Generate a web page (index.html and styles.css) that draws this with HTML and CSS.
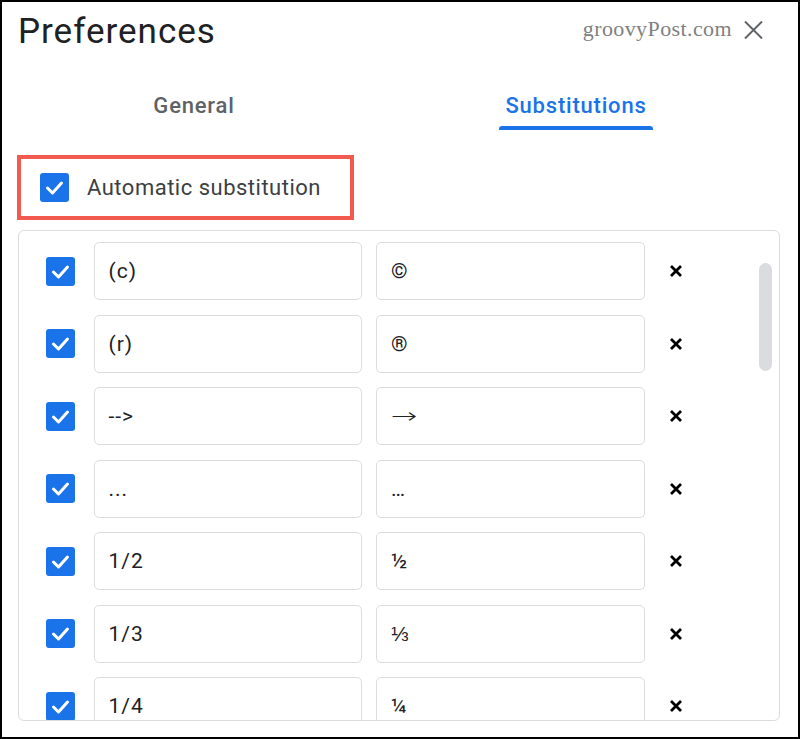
FILE: index.html
```html
<!DOCTYPE html>
<html>
<head>
<meta charset="utf-8">
<link rel="stylesheet" href="styles.css">
</head>
<body>
<div class="frame">
  <div class="header">
    <div class="title">Preferences</div>
    <div class="brand">
      <span class="site">groovyPost.com</span>
      <svg class="close" width="19" height="18" viewBox="0 0 19 18"><path d="M1 0.5 L18 17.5 M18 0.5 L1 17.5" stroke="#5f6368" stroke-width="2" fill="none"/></svg>
    </div>
  </div>
  <div class="tabs">
    <div class="tab">General<span class="bar"></span></div>
    <div class="tab active">Substitutions<span class="bar"></span></div>
  </div>
  <div class="auto">
    <span class="cb big"><svg viewBox="0 0 29 29"><path d="M7.5 15 L12.5 20 L21.5 10" stroke="#fff" stroke-width="3" fill="none" stroke-linecap="round" stroke-linejoin="round"/></svg></span>
    <span class="auto-label">Automatic substitution</span>
  </div>
  <div class="list">
    <div class="row"><span class="cb"><svg viewBox="0 0 29 29"><path d="M7.5 15 L12.5 20 L21.5 10" stroke="#fff" stroke-width="3" fill="none" stroke-linecap="round" stroke-linejoin="round"/></svg></span><div class="field f1">(c)</div><div class="field f2">©</div><svg class="del" viewBox="0 0 14 14"><path d="M2 2 L12 12 M12 2 L2 12" stroke="#000" stroke-width="2.8" fill="none"/></svg></div>
    <div class="row"><span class="cb"><svg viewBox="0 0 29 29"><path d="M7.5 15 L12.5 20 L21.5 10" stroke="#fff" stroke-width="3" fill="none" stroke-linecap="round" stroke-linejoin="round"/></svg></span><div class="field f1">(r)</div><div class="field f2">®</div><svg class="del" viewBox="0 0 14 14"><path d="M2 2 L12 12 M12 2 L2 12" stroke="#000" stroke-width="2.8" fill="none"/></svg></div>
    <div class="row"><span class="cb"><svg viewBox="0 0 29 29"><path d="M7.5 15 L12.5 20 L21.5 10" stroke="#fff" stroke-width="3" fill="none" stroke-linecap="round" stroke-linejoin="round"/></svg></span><div class="field f1">--&gt;</div><div class="field f2"><span class="arrow">→</span></div><svg class="del" viewBox="0 0 14 14"><path d="M2 2 L12 12 M12 2 L2 12" stroke="#000" stroke-width="2.8" fill="none"/></svg></div>
    <div class="row"><span class="cb"><svg viewBox="0 0 29 29"><path d="M7.5 15 L12.5 20 L21.5 10" stroke="#fff" stroke-width="3" fill="none" stroke-linecap="round" stroke-linejoin="round"/></svg></span><div class="field f1">...</div><div class="field f2">…</div><svg class="del" viewBox="0 0 14 14"><path d="M2 2 L12 12 M12 2 L2 12" stroke="#000" stroke-width="2.8" fill="none"/></svg></div>
    <div class="row"><span class="cb"><svg viewBox="0 0 29 29"><path d="M7.5 15 L12.5 20 L21.5 10" stroke="#fff" stroke-width="3" fill="none" stroke-linecap="round" stroke-linejoin="round"/></svg></span><div class="field f1">1/2</div><div class="field f2">½</div><svg class="del" viewBox="0 0 14 14"><path d="M2 2 L12 12 M12 2 L2 12" stroke="#000" stroke-width="2.8" fill="none"/></svg></div>
    <div class="row"><span class="cb"><svg viewBox="0 0 29 29"><path d="M7.5 15 L12.5 20 L21.5 10" stroke="#fff" stroke-width="3" fill="none" stroke-linecap="round" stroke-linejoin="round"/></svg></span><div class="field f1">1/3</div><div class="field f2">⅓</div><svg class="del" viewBox="0 0 14 14"><path d="M2 2 L12 12 M12 2 L2 12" stroke="#000" stroke-width="2.8" fill="none"/></svg></div>
    <div class="row"><span class="cb"><svg viewBox="0 0 29 29"><path d="M7.5 15 L12.5 20 L21.5 10" stroke="#fff" stroke-width="3" fill="none" stroke-linecap="round" stroke-linejoin="round"/></svg></span><div class="field f1">1/4</div><div class="field f2">¼</div><svg class="del" viewBox="0 0 14 14"><path d="M2 2 L12 12 M12 2 L2 12" stroke="#000" stroke-width="2.8" fill="none"/></svg></div>
    <div class="scrollbar"></div>
  </div>
</div>
</body>
</html>
```
FILE: styles.css
```css
* { box-sizing: border-box; }
html, body { margin: 0; padding: 0; background: #fff; }
body { font-family: Roboto, "Liberation Sans", sans-serif; color: #202124; }

.frame {
  width: 800px;
  height: 739px;
  border: 2px solid #000;
  overflow: hidden;
}

.header {
  display: flex;
  justify-content: space-between;
  align-items: flex-start;
  padding: 10px 35px 0 16px;
}
.title {
  font-size: 35px;
  line-height: 40px;
  font-weight: 400;
  letter-spacing: 1px;
  color: #202124;
}
.brand {
  display: flex;
  align-items: flex-start;
  gap: 12px;
  margin-top: 5px;
}
.site {
  font-family: "Liberation Serif", serif;
  font-size: 22px;
  line-height: 24px;
  letter-spacing: 0.4px;
  color: #7f7f7f;
}
.close { margin-top: 4px; }

.tabs {
  display: flex;
  margin-top: 42px;
  padding-left: 1px;
}
.tab {
  width: 382px;
  display: flex;
  flex-direction: column;
  align-items: center;
  font-size: 22px;
  line-height: 24px;
  font-weight: 500;
  letter-spacing: 0.8px;
  color: #5f6368;
}
.tab .bar {
  display: block;
  width: 154px;
  height: 4px;
  margin-top: 8px;
  border-radius: 3px 3px 0 0;
  background: transparent;
}
.tab.active { color: #1a73e8; }
.tab.active .bar { background: #1a73e8; }

.auto {
  margin: 25px 0 0 15px;
  width: 337px;
  height: 65px;
  border: 4px solid #f2594f;
  display: flex;
  align-items: center;
  padding-left: 19px;
  gap: 18px;
}
.auto-label {
  font-size: 22px;
  letter-spacing: 0.5px;
  color: #3c4043;
}

.cb {
  width: 29px;
  height: 29px;
  border-radius: 3px;
  background: #1a73e8;
  flex: none;
  display: block;
}
.cb svg { width: 29px; height: 29px; display: block; }

.list {
  position: relative;
  margin: 10px 0 0 16px;
  width: 762px;
  height: 491px;
  border: 1px solid #dadce0;
  border-radius: 6px;
  overflow: hidden;
  padding-top: 11px;
  display: flex;
  flex-direction: column;
  gap: 14.5px;
}
.row {
  display: flex;
  align-items: center;
  height: 58px;
  flex: none;
  padding-left: 27px;
}
.row .cb { margin-right: 18.5px; }
.field {
  height: 58px;
  border: 1px solid #dadce0;
  border-radius: 5px;
  padding-left: 14px;
  display: flex;
  align-items: center;
  font-size: 21px;
  letter-spacing: 1px;
  color: #202124;
}
.arrow {
  font-family: "DejaVu Sans", sans-serif;
  font-size: 21px;
  font-weight: 300;
  transform: scaleX(1.5);
  transform-origin: left center;
  display: inline-block;
}
.f1 { width: 268.5px; margin-right: 14px; }
.f2 { width: 269px; margin-right: 24px; }
.del { width: 14px; height: 14px; flex: none; }

.scrollbar {
  position: absolute;
  left: 740px;
  top: 32px;
  width: 13px;
  height: 108px;
  border-radius: 7px;
  background: #dadce0;
}
```
